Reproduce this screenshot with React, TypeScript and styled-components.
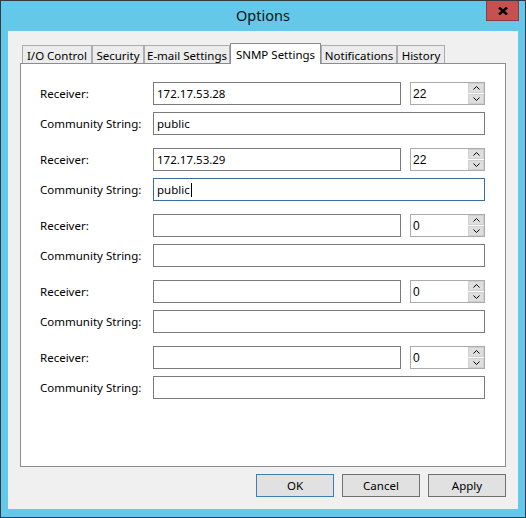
import styled, { createGlobalStyle } from "styled-components";

const GlobalStyle = createGlobalStyle`
  html, body {
    margin: 0;
    padding: 0;
    background: #ffffff;
  }

  body {
    font-family: "Noto Sans", "Open Sans", sans-serif;
    font-size: 11.5px;
    color: #000000;
  }

  * {
    box-sizing: border-box;
  }
`;

const Window = styled.div`
  width: 526px;
  height: 518px;
  display: flex;
  flex-direction: column;
  background: #63c8ea;
  border: 1px solid #333b40;
`;

const TitleBar = styled.div`
  height: 30px;
  display: grid;
  grid-template-columns: 1fr auto 1fr;
  align-items: start;
`;

const Title = styled.div`
  grid-column: 2;
  font-size: 14.5px;
  line-height: 28px;
  color: #111111;
`;

const CloseButton = styled.button`
  grid-column: 3;
  justify-self: end;
  width: 33px;
  height: 20px;
  margin-right: 6px;
  padding: 0;
  display: flex;
  align-items: center;
  justify-content: center;
  background: #c75050;
  border: 1px solid #8a3b3b;
  border-top: none;
`;

const Client = styled.div`
  flex: 1;
  margin: 0 7px 8px;
  padding: 12px;
  display: flex;
  flex-direction: column;
  background: #f0f0f0;
`;

const TabStrip = styled.div`
  height: 20px;
  padding-left: 2px;
  display: flex;
  align-items: flex-end;
  position: relative;
  z-index: 1;
`;

const Tab = styled.div<{ $width: number; $active?: boolean }>`
  width: ${(p) => p.$width}px;
  height: ${(p) => (p.$active ? 21 : 18)}px;
  margin-bottom: ${(p) => (p.$active ? -1 : 0)}px;
  display: flex;
  align-items: center;
  justify-content: center;
  white-space: nowrap;
  background: ${(p) => (p.$active ? "#ffffff" : "#ececec")};
  border: 1px solid ${(p) => (p.$active ? "#898c95" : "#acacac")};
  border-bottom: none;
  padding-top: ${(p) => (p.$active ? 0 : 1)}px;
`;

const Pane = styled.div`
  height: 404px;
  padding: 18px 20px 0 19px;
  display: flex;
  flex-direction: column;
  background: #ffffff;
  border: 1px solid #898c95;
`;

const ReceiverGroup = styled.div`
  display: flex;
  flex-direction: column;
  gap: 7px;
  margin-bottom: 13px;
`;

const Row = styled.div`
  display: grid;
  grid-template-columns: 113px 1fr;
  align-items: center;
`;

const Label = styled.div`
  white-space: nowrap;
`;

const FieldLine = styled.div`
  display: flex;
  gap: 9px;
`;

const TextBox = styled.div<{ $width?: number; $focused?: boolean }>`
  width: ${(p) => (p.$width ? `${p.$width}px` : "100%")};
  height: 23px;
  padding: 0 3px;
  display: flex;
  align-items: center;
  white-space: nowrap;
  background: #ffffff;
  border: 1px solid ${(p) => (p.$focused ? "#3c6e9c" : "#7a7a7a")};
`;

const Caret = styled.span`
  display: inline-block;
  width: 1px;
  height: 14px;
  margin-left: 1px;
  background: #000000;
`;

const SpinBox = styled.div`
  width: 75px;
  height: 23px;
  display: flex;
  background: #ffffff;
  border: 1px solid #ababab;
`;

const SpinValue = styled.div`
  flex: 1;
  padding-left: 2px;
  display: flex;
  align-items: center;
  font-family: "Liberation Sans", Arial, sans-serif;
  font-size: 12px;
`;

const SpinButtons = styled.div`
  width: 16px;
  display: flex;
  flex-direction: column;
  gap: 1px;
`;

const SpinButton = styled.div`
  flex: 1;
  display: flex;
  align-items: center;
  justify-content: center;
  background: #dedede;
  border: 1px solid #cfcfcf;
`;

const ButtonBar = styled.div`
  margin-top: 7px;
  display: flex;
  justify-content: flex-end;
  gap: 8px;
`;

const DialogButton = styled.button<{ $default?: boolean }>`
  width: 78px;
  height: 23px;
  padding: 0;
  font-family: inherit;
  font-size: 11.5px;
  color: #000000;
  background: #e1e1e1;
  border: 1px solid ${(p) => (p.$default ? "#3c7fb1" : "#707070")};
`;

const tabs = [
  { label: "I/O Control", width: 70 },
  { label: "Security", width: 52 },
  { label: "E-mail Settings", width: 86 },
  { label: "SNMP Settings", width: 91, active: true },
  { label: "Notifications", width: 76 },
  { label: "History", width: 48 },
];

const receivers = [
  { host: "172.17.53.28", port: "22", community: "public" },
  { host: "172.17.53.29", port: "22", community: "public", focused: true },
  { host: "", port: "0", community: "" },
  { host: "", port: "0", community: "" },
  { host: "", port: "0", community: "" },
];

const Chevron = ({ up }: { up?: boolean }) => (
  <svg width="7" height="4" viewBox="0 0 7 4">
    <path
      d={up ? "M0.5 3.5 L3.5 0.5 L6.5 3.5" : "M0.5 0.5 L3.5 3.5 L6.5 0.5"}
      fill="none"
      stroke="#000"
      strokeWidth="1"
    />
  </svg>
);

const App = () => {
  return (
    <>
      <GlobalStyle />
      <Window>
        <TitleBar>
          <Title>Options</Title>
          <CloseButton aria-label="Close">
            <svg width="10" height="8" viewBox="0 0 10 8">
              <path d="M1 0.5 L9 7.5 M9 0.5 L1 7.5" stroke="#000" strokeWidth="2.4" />
            </svg>
          </CloseButton>
        </TitleBar>
        <Client>
          <TabStrip>
            {tabs.map((tab) => (
              <Tab key={tab.label} $width={tab.width} $active={tab.active}>
                {tab.label}
              </Tab>
            ))}
          </TabStrip>
          <Pane>
            {receivers.map((r, index) => (
              <ReceiverGroup key={index}>
                <Row>
                  <Label>Receiver:</Label>
                  <FieldLine>
                    <TextBox $width={248}>{r.host}</TextBox>
                    <SpinBox>
                      <SpinValue>{r.port}</SpinValue>
                      <SpinButtons>
                        <SpinButton>
                          <Chevron up />
                        </SpinButton>
                        <SpinButton>
                          <Chevron />
                        </SpinButton>
                      </SpinButtons>
                    </SpinBox>
                  </FieldLine>
                </Row>
                <Row>
                  <Label>Community String:</Label>
                  <TextBox $focused={r.focused}>
                    {r.community}
                    {r.focused && <Caret />}
                  </TextBox>
                </Row>
              </ReceiverGroup>
            ))}
          </Pane>
          <ButtonBar>
            <DialogButton $default>OK</DialogButton>
            <DialogButton>Cancel</DialogButton>
            <DialogButton>Apply</DialogButton>
          </ButtonBar>
        </Client>
      </Window>
    </>
  );
};

export default App;
